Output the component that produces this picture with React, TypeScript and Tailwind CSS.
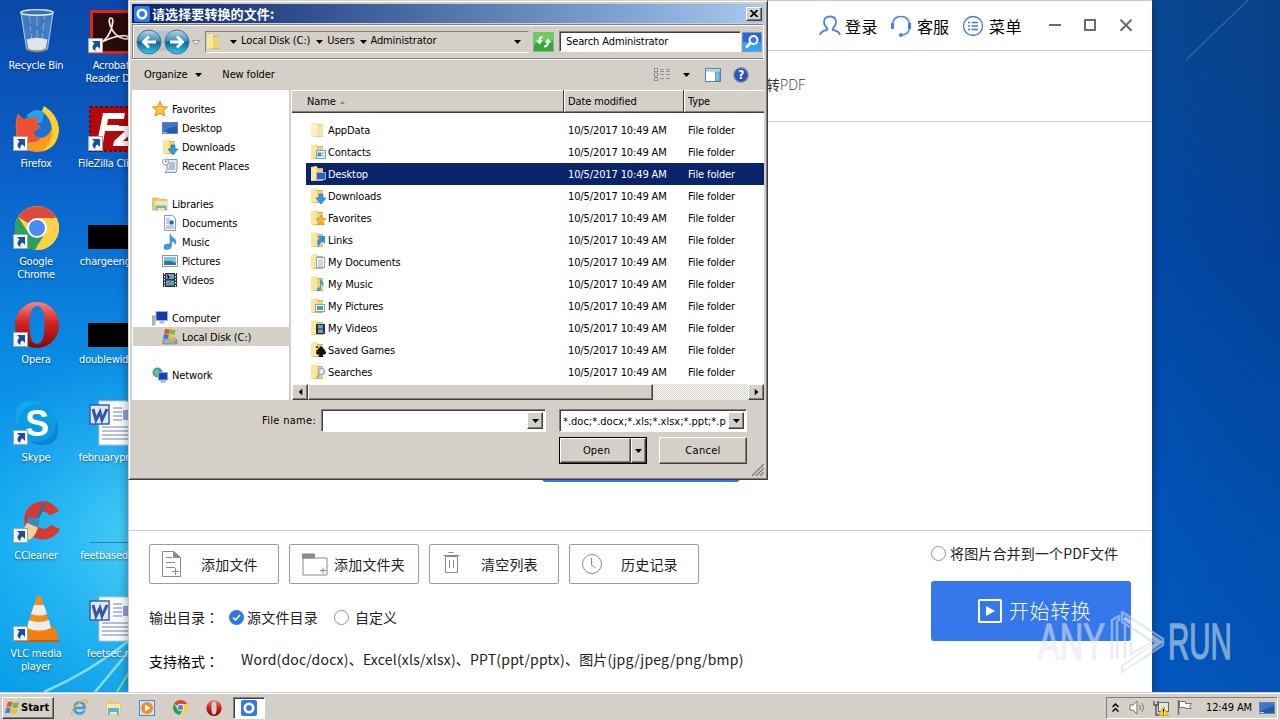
import type { ReactNode } from "react";

const UI_FONT = "font-['DejaVu_Sans_Condensed','DejaVu_Sans',sans-serif] tracking-[-0.12px]";
const CJK_FONT = "font-['Noto_Sans_CJK_SC',sans-serif]";

/* ---------- shared bits ---------- */

function Down({ className = "" }: { className?: string }) {
  return (
    <svg width="7" height="4" viewBox="0 0 7 4" className={`shrink-0 ${className}`}>
      <path d="M0 0h7L3.5 4z" fill="currentColor" />
    </svg>
  );
}

function Shortcut() {
  return (
    <svg width="16" height="16" viewBox="0 0 16 16" className="absolute -left-px bottom-0">
      <rect x=".5" y=".5" width="14" height="14" fill="#f4f6f8" stroke="#9aa" />
      <path d="M4 3h8v8l-2.500-2.500C7.500 9.500 7 11 7.500 13 4 11.500 3.500 8.500 6.500 5.500z" fill="#1c4f96" />
    </svg>
  );
}

function AppLogo({ size }: { size: number }) {
  return (
    <svg width={size} height={size} viewBox="0 0 16 16" className="shrink-0">
      <rect width="16" height="16" rx="2" fill="#3478ee" />
      <circle cx="8" cy="8" r="4.200" fill="none" stroke="#fff" strokeWidth="2.600" />
    </svg>
  );
}

function ChromeIcon({ size }: { size: number }) {
  return (
    <svg width={size} height={size} viewBox="0 0 44 44">
      <circle cx="22" cy="22" r="22" fill="#fdd54a" />
      <path d="M22 22 3 11A22 22 0 0 1 41.500 12H22z" fill="#dc4a3c" />
      <path d="M3 11A22 22 0 0 0 20 44l9-15-7-7-9 4z" fill="#27a25c" />
      <path d="M22 12h19.500A22 22 0 0 1 20 44l10.500-17z" fill="#fdd04a" />
      <circle cx="22" cy="22" r="10" fill="#fff" />
      <circle cx="22" cy="22" r="8" fill="#4a8af4" />
    </svg>
  );
}

function OperaIcon({ size }: { size: number }) {
  return (
    <svg width={size} height={size} viewBox="0 0 44 46">
      <defs>
        <linearGradient id="opera" x1="0" y1="0" x2="0" y2="1">
          <stop offset="0" stopColor="#f2867c" />
          <stop offset=".45" stopColor="#d5231f" />
          <stop offset="1" stopColor="#8a0508" />
        </linearGradient>
      </defs>
      <path
        fillRule="evenodd"
        fill="url(#opera)"
        d="M22 0a22 23 0 1 0 .01 0zM22 4c6 0 7.500 9 7.500 19S28 42 22 42s-7.500-9-7.500-19S16 4 22 4z"
      />
    </svg>
  );
}

/* ---------- desktop ---------- */

function RecycleBin() {
  return (
    <svg width="38" height="46" viewBox="0 0 40 48">
      <path d="M3 4 9 43q11 5 22 0l6-39z" fill="#8fb5dc" fillOpacity=".45" stroke="#bcd3ea" />
      <path d="M9 33q10-4 22 0l-2 10q-9 4-18 0z" fill="#dde4ec" />
      <path d="M12 8l3 32M20 8v34M28 8l-3 32" stroke="#d3e5f6" strokeOpacity=".45" />
      <path d="M10 15l9 7 10-10M13 26l8-5 8 6" stroke="#3f76b8" fill="none" strokeWidth="2" />
      <ellipse cx="20" cy="4.500" rx="17" ry="3" fill="#3f6fa8" stroke="#dbe7f2" strokeWidth="1.500" />
      <path d="M9 43q11 5 22 0" stroke="#8c8576" strokeWidth="2" fill="none" />
    </svg>
  );
}

function Firefox() {
  return (
    <svg width="44" height="46" viewBox="0 0 44 46">
      <circle cx="23" cy="22" r="17" fill="#1d6fd0" />
      <path d="M12 9q9-8 17-3l-2 10-10 4z" fill="#27a0ea" />
      <path d="M29 0q14 9 15 23-1 22-22 23Q2 45 1 26 0 14 3 8l6 6q5-3 10-2l2-2q2 4 0 8l4 2q-1 4-6 5-1 6 6 7 8-1 11-8 3 0 3-7-3-9-10-17z" fill="#fb9a1f" />
      <path d="M29 0q14 9 15 23-1 18-16 22 9-9 9-20 0-12-10-20z" fill="#fed02f" />
      <path d="M3 8l6 6q5-3 10-2l2-2q2 4 0 8l4 2q-1 4-6 5-1 6 6 7-2 5-10 4-4 4-7 2Q1 32 1 24 1 14 3 8z" fill="#ef5033" />
    </svg>
  );
}

function Acrobat() {
  return (
    <svg width="44" height="44" viewBox="0 0 44 44">
      <rect width="44" height="44" fill="#e02418" />
      <rect x="3" y="3" width="41" height="38" fill="#2b0a0c" />
      <path d="M10 33q9-4 12-17 2-8-1-8t-1 7q4 12 15 14 4 0 3-2t-8-1q-8 1-18 6-2 2-2 1z" fill="none" stroke="#f2e9e9" strokeWidth="1.700" />
    </svg>
  );
}

function FileZilla() {
  return (
    <svg width="46" height="46" viewBox="0 0 46 46">
      <rect x="1" y="1" width="44" height="44" fill="#b3090b" stroke="#7d0204" strokeWidth="2" strokeDasharray="3 2" />
      <path d="M14 7h22l-1 6H19l-1 6h12l-1 6H16l-2 12H8z" fill="#fff" />
      <path d="M28 20h18l-1 5-11 10h11l-1 5H24l1-5 11-10h-9z" fill="#fff" />
    </svg>
  );
}

function Skype() {
  return (
    <svg width="46" height="46" viewBox="0 0 46 46">
      <rect x="2" y="1" width="30" height="30" rx="13" fill="#17a7e8" />
      <rect x="13" y="14" width="31" height="31" rx="13" fill="#0b86d6" />
      <circle cx="23" cy="23" r="19" fill="#0a9be3" />
      <text x="23" y="36" textAnchor="middle" fontSize="36" fontWeight="bold" fill="#fff" fontFamily="Liberation Sans, sans-serif">
        S
      </text>
    </svg>
  );
}

function CCleaner() {
  return (
    <svg width="50" height="46" viewBox="0 0 50 46">
      <path d="M49 12Q40-1 27 2 12 5 11 22q1 20 20 21 13 0 19-11l-10-5q-5 6-10 4-7-2-6-10 2-9 9-8 4 1 6 4z" fill="#d43a2e" />
      <path d="M33 4 26 20" stroke="#1e6fae" strokeWidth="3" />
      <path d="M16 18l12 4-2 8-12-5z" fill="#3289c4" />
      <path d="M14 25l12 5q-3 12-12 14-8 1-13-5 9-3 13-14z" fill="#f2d194" />
    </svg>
  );
}

function Vlc() {
  return (
    <svg width="46" height="47" viewBox="0 0 46 47">
      <path d="M6 32h35l4 13H2z" fill="#ee7f12" />
      <path d="M2 45h43v2H2z" fill="#c95d05" />
      <path d="M23 1h4l10 33q-13 6-25 0z" fill="#f58b18" />
      <path d="M20 10h10l3 9q-8 3-16 0zM15 25q10 4 20 0l2 8q-12 5-24 0z" fill="#ececec" />
    </svg>
  );
}

function WordDoc() {
  return (
    <svg width="46" height="46" viewBox="0 0 46 46">
      <path d="M10 1h28l8 8v36H10z" fill="#fdfdff" stroke="#b9c1d6" />
      <path d="M24 8h9M24 12h9M24 16h9M24 20h9M13 27h31M13 31h31M13 35h31M13 39h31" stroke="#6f80b8" />
      <path d="M34 10h10v10H34z" fill="#8fa5d6" />
      <rect x="1" y="5" width="19" height="19" fill="#dfe8fa" stroke="#3a5cab" strokeWidth="1.500" />
      <path d="M4 9l3 11 4-8 2 8 5-11" fill="none" stroke="#3556a6" strokeWidth="3" />
    </svg>
  );
}

function BlackFile() {
  return <div className="mb-px h-6 w-12 shrink-0 bg-black" />;
}

function LineFile() {
  return <div className="mb-px h-px w-11 bg-[#2a86a6]" />;
}

type DesktopItem = { label: string; icon: ReactNode; shortcut?: boolean };

const column1: DesktopItem[] = [
  { label: "Recycle Bin", icon: <RecycleBin /> },
  { label: "Firefox", icon: <Firefox />, shortcut: true },
  { label: "Google Chrome", icon: <ChromeIcon size={44} />, shortcut: true },
  { label: "Opera", icon: <OperaIcon size={46} />, shortcut: true },
  { label: "Skype", icon: <Skype />, shortcut: true },
  { label: "CCleaner", icon: <CCleaner />, shortcut: true },
  { label: "VLC media player", icon: <Vlc />, shortcut: true },
];

const column2: DesktopItem[] = [
  { label: "Acrobat Reader DC", icon: <Acrobat />, shortcut: true },
  { label: "FileZilla Client", icon: <FileZilla />, shortcut: true },
  { label: "chargeengi...", icon: <BlackFile /> },
  { label: "doublewide...", icon: <BlackFile /> },
  { label: "februarypro...", icon: <WordDoc /> },
  { label: "feetbased.rtf", icon: <LineFile /> },
  { label: "feetsec.rtf", icon: <WordDoc /> },
];

function DesktopColumn({ items }: { items: DesktopItem[] }) {
  return (
    <div className="flex w-[75px] flex-col">
      {items.map((item) => (
        <div key={item.label} className="flex h-[98px] flex-col items-center">
          <div className="relative flex h-[49px] w-[46px] items-end justify-center">
            {item.icon}
            {item.shortcut && <Shortcut />}
          </div>
          <span className="mr-px mt-[5px] w-[72px] text-center text-[11px] leading-[13px] tracking-[-0.2px] text-white [text-shadow:0_1px_2px_#0048]">
            {item.label}
          </span>
        </div>
      ))}
    </div>
  );
}

function Wallpaper() {
  return (
    <svg width="1280" height="720" className="absolute inset-0">
      <defs>
        <linearGradient id="sky" x1="0" y1="0" x2="0" y2="1">
          <stop offset="0" stopColor="#0a48a8" />
          <stop offset=".25" stopColor="#0b62ca" />
          <stop offset=".5" stopColor="#0a8ce4" />
          <stop offset=".75" stopColor="#10a8f2" />
          <stop offset="1" stopColor="#0a9ee8" />
        </linearGradient>
        <radialGradient id="glow" cx="150" cy="540" r="200" gradientUnits="userSpaceOnUse">
          <stop offset="0" stopColor="#5fdcf8" stopOpacity=".8" />
          <stop offset="1" stopColor="#30c0f5" stopOpacity="0" />
        </radialGradient>
        <linearGradient id="right" x1="0" y1="0" x2="0" y2="1">
          <stop offset="0" stopColor="#0b4284" />
          <stop offset=".35" stopColor="#03429a" />
          <stop offset=".75" stopColor="#0252b4" />
          <stop offset="1" stopColor="#0358be" />
        </linearGradient>
        <linearGradient id="rightShade" x1="0" y1="0" x2="1" y2="0">
          <stop offset="0" stopColor="#0060d0" stopOpacity=".2" />
          <stop offset="1" stopColor="#003a88" stopOpacity=".15" />
        </linearGradient>
      </defs>
      <rect width="400" height="720" fill="url(#sky)" />
      <rect width="400" height="720" fill="url(#glow)" />
      <path d="M44 692Q90 672 130 640M95 692l35-42" stroke="#b8f2fb" strokeOpacity=".7" strokeWidth="2.500" fill="none" />
      <path d="M117 692l12-20" stroke="#6fe08a" strokeWidth="2" />
      <rect x="1152" width="128" height="720" fill="url(#right)" />
      <rect x="1152" width="128" height="720" fill="url(#rightShade)" />
      <path d="M1248 0l-62 60" stroke="#5b93c8" strokeOpacity=".4" strokeWidth="1.500" />
    </svg>
  );
}

/* ---------- converter window ---------- */

function ConverterHeader() {
  return (
    <header className="flex h-[50px] items-center justify-end border-b border-[#cfcfcf] pr-[19px] text-[16px] text-black">
      <svg width="22" height="22" viewBox="0 0 22 22" fill="none" stroke="#4a82e6" strokeWidth="1.800">
        <path d="M1 20q1-4 7-5 1-1-1-3-2-2-2-5 0-5.500 6-5.500T17 7q0 3-2 5t-1 3q6 1 7 5" />
      </svg>
      <span className="ml-1 w-[45px] tracking-[0.4px]">登录</span>
      <svg width="22" height="22" viewBox="0 0 22 22" fill="none" stroke="#4a82e6" strokeWidth="1.600">
        <path d="M2.500 10Q3 1.500 11 1.500T19.500 10v2q0 7-7 8" />
        <path d="M2.500 8v6M19.500 8v6" strokeWidth="3" />
        <circle cx="11" cy="20" r="1.200" fill="#4a82e6" />
      </svg>
      <span className="ml-[5px] w-[45px]">客服</span>
      <svg width="22" height="22" viewBox="0 0 22 22" fill="none" stroke="#3d78e0" strokeWidth="1.300">
        <circle cx="11" cy="11" r="9.500" />
        <path d="M6 7.500h2M9.500 7.500H16M6 11h2M9.500 11H16M6 14.500h2M9.500 14.500H16" strokeWidth="1.600" />
      </svg>
      <span className="ml-[5px] w-[60px] tracking-[0.4px]">菜单</span>
      <svg width="84" height="14" viewBox="0 0 84 14" fill="none" stroke="#6b6b6b" strokeWidth="2">
        <path d="M0 6h12M71.500 .800l11 11M82.500 .800l-11 11" />
        <rect x="36" y="1" width="10" height="10" />
      </svg>
    </header>
  );
}

function ToolButton({ icon, label, narrow }: { icon: ReactNode; label: string; narrow?: boolean }) {
  return (
    <button className="flex h-10 w-[130px] items-center rounded-[2px] border border-[#9b9b9b] bg-white pl-3 text-[14px] tracking-[0.2px] text-[#222]">
      {icon}
      <span className={narrow ? "ml-1" : "ml-[17px]"}>{label}</span>
    </button>
  );
}

function ToolIcon({ w, children }: { w: number; children: ReactNode }) {
  return (
    <svg width={w} height="28" viewBox={`0 0 ${w} 28`} fill="none" stroke="#8a8a8a" className="shrink-0">
      {children}
    </svg>
  );
}

/* the TC face centres the full-width colon in its cell */
function Colon() {
  return <span className="font-['Noto_Sans_CJK_TC',sans-serif]" lang="zh-Hant">：</span>;
}

function ConverterWindow() {
  return (
    <section
      className={`absolute left-32 top-0 flex h-[692px] w-[1024px] flex-col border-l border-t border-[#c9c9c9] bg-white tracking-normal shadow-[0_0_10px_#0006] ${CJK_FONT}`}
    >
      <ConverterHeader />
      <div className="flex h-[71px] shrink-0 items-center border-b border-[#cfcfcf] pb-1 pl-[637px] text-[14px] text-[#333]">
        转<span className="font-['Open_Sans',sans-serif] font-light">PDF</span>
      </div>
      <div className="flex h-[409px] shrink-0 items-end border-b border-[#d0d0d0] pb-12 pl-[413px]">
        <div className="h-12 w-[198px] rounded bg-[#3478ec]" />
      </div>
      <footer className="flex flex-1 justify-between pl-5 pr-[21px] text-[14px] text-[#222]">
        <div className="flex flex-col pt-[13px]">
          <div className="flex gap-2.5">
            <ToolButton
              label="添加文件"
              icon={
                <ToolIcon w={22}>
                  <path d="M.5 1.500h11l7 6v19H.5z" />
                  <path d="M11.500 1.500v6h7z" fill="#8a8a8a" />
                  <path d="M4 7.500h6M4 12.500h9M4 17.500h9M10 21.500h7M13.500 18v7" />
                </ToolIcon>
              }
            />
            <ToolButton
              narrow
              label="添加文件夹"
              icon={
                <ToolIcon w={28}>
                  <rect x=".5" y="4" width="12" height="4" fill="#8a8a8a" />
                  <path d="M1 8h24v17H1zM18 20.500h6M21 17.500v6" />
                </ToolIcon>
              }
            />
            <ToolButton
              label="清空列表"
              icon={
                <ToolIcon w={22}>
                  <path d="M3.500 6.500h12v16h-12zM1.500 5.500h16M6.500 2.500h5M7.500 10v8M11.500 10v8" />
                </ToolIcon>
              }
            />
            <ToolButton
              label="历史记录"
              icon={
                <ToolIcon w={22}>
                  <circle cx="10" cy="14" r="9.500" />
                  <path d="M9.500 8v7l4 3" />
                </ToolIcon>
              }
            />
          </div>
          <div className="mt-[22px] flex h-[22px] items-center">
            <span className="w-20">输出目录<Colon /></span>
            <svg width="15" height="15" viewBox="0 0 15 15">
              <circle cx="7.500" cy="7.500" r="7.500" fill="#2f76e8" />
              <path d="M4 7.500l2.500 2.500L11 5" fill="none" stroke="#fff" strokeWidth="1.600" />
            </svg>
            <span className="ml-[3px] w-[87px] tracking-[0.2px]">源文件目录</span>
            <span className="size-[15px] rounded-full border border-[#8f8f8f]" />
            <span className="ml-1.5">自定义</span>
          </div>
          <div className="mt-5 flex h-[22px] items-center">
            <span className="mt-1 w-[92px] text-black">支持格式<Colon /></span>
            <span className="whitespace-nowrap tracking-[0.2px]">
              Word(doc/docx)、Excel(xls/xlsx)、PPT(ppt/pptx)、图片(jpg/jpeg/png/bmp)
            </span>
          </div>
        </div>
        <div className="flex w-[200px] flex-col pt-[11px]">
          <div className="flex h-[22px] items-center whitespace-nowrap tracking-[0.15px]">
            <span className="mr-1 size-[15px] rounded-full border border-[#8f8f8f]" />
            将图片合并到一个PDF文件
          </div>
          <button className="mt-[17px] flex h-[60px] items-center rounded-[3px] bg-[#3478ec] pl-[47px] text-[20px] font-light tracking-[0.6px] text-white">
            <svg width="24" height="24" viewBox="0 0 24 24" className="mr-[7px]">
              <rect x="1" y="1" width="22" height="22" rx="1" fill="none" stroke="#fff" strokeWidth="2" />
              <path d="M8 7l9 5-9 5z" fill="#fff" />
            </svg>
            开始转换
          </button>
        </div>
      </footer>
    </section>
  );
}

/* ---------- file dialog ---------- */

type Kind =
  | "plain" | "contacts" | "desktop" | "down" | "star" | "links" | "doc"
  | "music" | "picture" | "video" | "games" | "search";

const overlays: Record<Kind, ReactNode> = {
  plain: null,
  contacts: (
    <g>
      <rect x="6.500" y="6.500" width="9" height="8" fill="#eef6fb" stroke="#6fa3c9" />
      <path d="M8 9h3v3H8zM12 9h2M12 12h2" fill="#3f88c5" stroke="#3f88c5" strokeWidth=".8" />
    </g>
  ),
  desktop: <path d="M6.500 6.500h9v7h-9z" fill="#2b62b8" stroke="#9bb7dc" />,
  down: <path d="M9 6h4v4h3l-5 6-5-6h3z" fill="#2f9be6" stroke="#1469ad" strokeWidth=".6" />,
  star: <path d="M11 5l1.500 3.500 3.500.3-2.700 2.500.9 3.700-3.200-2-3.200 2 .9-3.700L6 8.800l3.500-.3z" fill="#fbb32a" stroke="#cf7e10" strokeWidth=".6" />,
  links: <path d="M7 4h8v8l-2.500-2.500Q9 11 9 15 5 10 9.500 6.500z" fill="#2f8fdc" />,
  doc: (
    <g>
      <rect x="6.500" y="3.500" width="8" height="10" fill="#fff" stroke="#8ea6c0" />
      <path d="M8 6h5M8 8h5M8 10h5M8 12h5" stroke="#7b9cc4" strokeWidth=".8" />
    </g>
  ),
  music: <path d="M10 3q5 3 3 8l-1-3-1 .5V13q-1 3-4 2-1-3 3-4z" fill="#3d97dd" />,
  picture: (
    <g>
      <rect x="5.500" y="6.500" width="9" height="7" fill="#fff" stroke="#86a3b8" />
      <path d="M7 8h6v4H7z" fill="#4ca1b8" />
    </g>
  ),
  video: (
    <g>
      <rect x="6" y="4" width="9" height="10" fill="#27323d" />
      <path d="M8 5h5v3.500H8zM8 9.500h5V13H8z" fill="#6fa0c4" />
    </g>
  ),
  games: (
    <g>
      <path d="M11 4q5 4 5 7.500-2 2-3.500.5l1 3h-5l1-3Q8 13.500 6 11.500 6 8 11 4z" fill="#111" />
      <path d="M6 4h2v2H6zM6 8h2v2H6z" fill="#5c4a22" />
    </g>
  ),
  search: (
    <g>
      <circle cx="11.500" cy="7.500" r="3" fill="#e4f0fa" stroke="#8aa4c0" strokeWidth="1.200" />
      <path d="M9.500 10 7 14" stroke="#c0a56a" strokeWidth="2" />
    </g>
  ),
};

function FolderIcon({ kind = "plain", faded }: { kind?: Kind; faded?: boolean }) {
  return (
    <svg width="16" height="16" viewBox="0 0 16 16" className={`shrink-0 ${faded ? "opacity-60" : ""}`}>
      <path d="M1 1h6l1 1h5v13H1z" fill="#d9b44a" />
      <path d="M1 1l6-1v14l-6 1z" fill="#f8e79f" />
      <path d="M7 3h6v11H7z" fill="#edd175" />
      {overlays[kind]}
    </svg>
  );
}

function Mini({ children }: { children: ReactNode }) {
  return (
    <svg width="16" height="16" viewBox="0 0 16 16" className="shrink-0">
      {children}
    </svg>
  );
}

const monitor = (
  <Mini>
    <rect x=".5" y="2.500" width="15" height="11" fill="#245aa8" stroke="#5d86b8" />
    <path d="M1 3h14v3Q8 7 1 12z" fill="#3f78c8" />
    <path d="M1 12.500h4" stroke="#bcd0e6" />
  </Mini>
);

type TreeItem = { label: string; icon: ReactNode; level: 0 | 1; active?: boolean } | null;

const tree: TreeItem[] = [
  {
    label: "Favorites",
    level: 0,
    icon: (
      <Mini>
        <path d="M8 .5l2.200 5 5.300.5-4 3.600 1.200 5.400L8 12.200 3.300 15l1.200-5.400L.5 6l5.300-.5z" fill="#ffc53c" stroke="#d98a1c" />
      </Mini>
    ),
  },
  { label: "Desktop", level: 1, icon: monitor },
  { label: "Downloads", level: 1, icon: <FolderIcon kind="down" /> },
  {
    label: "Recent Places",
    level: 1,
    icon: (
      <Mini>
        <path d="M5 1.500h10v10l-1 3H3l2-3z" fill="#e3ebf2" stroke="#8296a8" />
        <path d="M7 5h6M7 7h6M7 9h6M6 11h7" stroke="#7d96b0" />
        <circle cx="3.500" cy="4" r="3" fill="#fff" stroke="#8a98a6" />
        <path d="M3.500 2.500V4H5" stroke="#555" fill="none" strokeWidth=".8" />
      </Mini>
    ),
  },
  null,
  {
    label: "Libraries",
    level: 0,
    icon: (
      <Mini>
        <path d="M.5 2h6l1 1.500H15V14H.5z" fill="#e9cc6c" stroke="#c9a646" strokeWidth=".6" />
        <path d="M3 5h12v9H3z" fill="#f7e6a4" />
        <path d="M3.500 14.500V9.500h11v5l-2-.5v-2h-7v2z" fill="#64b5d8" />
      </Mini>
    ),
  },
  {
    label: "Documents",
    level: 1,
    icon: (
      <Mini>
        <path d="M2.500.5h8l3 3v12h-11z" fill="#fff" stroke="#8a9bb0" />
        <path d="M4 4h4M4 6h3M4 8h3M4 11h8M4 13h8" stroke="#7d9ccd" />
        <path d="M7.500 5.500h4v4h-4z" fill="#2b62ad" />
      </Mini>
    ),
  },
  {
    label: "Music",
    level: 1,
    icon: (
      <Mini>
        <path d="M8 0q1 3 4 4.500t1 6q0-3-3.500-3.500v5q0 3-4 3.500T2 13q0-3 3.500-3H8z" fill="#3c9be3" stroke="#2376b8" strokeWidth=".5" />
      </Mini>
    ),
  },
  {
    label: "Pictures",
    level: 1,
    icon: (
      <Mini>
        <rect x=".5" y="2.500" width="15" height="11" fill="#fff" stroke="#8b9aa6" />
        <path d="M2 4h12v8H2z" fill="#7fc3ea" />
        <path d="M2 8q6-1 12 2v2H2z" fill="#2c7a86" />
      </Mini>
    ),
  },
  {
    label: "Videos",
    level: 1,
    icon: (
      <Mini>
        <rect x="1" y="1" width="14" height="14" fill="#26313c" />
        <path d="M4 2h8v5H4zM4 8.500h8v5H4z" fill="#5fa3c9" />
        <path d="M5 2l3 3-2 2M9 9l-3 3" stroke="#b8453c" />
        <path d="M2.500 1v14M13.500 1v14" stroke="#fff" strokeDasharray="1.500 1.500" />
      </Mini>
    ),
  },
  null,
  {
    label: "Computer",
    level: 0,
    icon: (
      <Mini>
        <rect x="0" y="6" width="3" height="9" fill="#b7c4a9" stroke="#7c8870" strokeWidth=".6" />
        <rect x="4" y="1.500" width="11.500" height="9" fill="#1a35b0" stroke="#9cb0d8" />
        <path d="M8 11h4l1 2.500H7z" fill="#b6bfca" />
      </Mini>
    ),
  },
  {
    label: "Local Disk (C:)",
    level: 1,
    active: true,
    icon: (
      <Mini>
        <path d="M1 11l3-2h8l3 2v4H1z" fill="#a7adb3" stroke="#70767c" strokeWidth=".7" />
        <path d="M12 13h2" stroke="#35c24a" strokeWidth="1.500" />
        <path d="M3 0l5 .5-1 4.500-5-.5z" fill="#e6512a" />
        <path d="M8.500.5l5 .5-1 4.500-5-.5z" fill="#7bb93a" />
        <path d="M2 5l5 .5L6 10l-5-.5z" fill="#3d7fd6" />
        <path d="M7.500 5.500l5 .5-1 4.500-5-.5z" fill="#f2bc2c" />
      </Mini>
    ),
  },
  null,
  {
    label: "Network",
    level: 0,
    icon: (
      <Mini>
        <circle cx="5.500" cy="5.500" r="5" fill="#3c9cc9" />
        <path d="M2 4q3-3 5 0T3 9z" fill="#6fc470" />
        <rect x="6.500" y="5.500" width="9" height="7.500" fill="#1a3fc0" stroke="#8fa6d0" />
        <path d="M9 13.500h4l1 2H8z" fill="#a5afbc" />
      </Mini>
    ),
  },
];

const files: { name: string; kind: Kind; selected?: boolean }[] = [
  { name: "AppData", kind: "plain" },
  { name: "Contacts", kind: "contacts" },
  { name: "Desktop", kind: "desktop", selected: true },
  { name: "Downloads", kind: "down" },
  { name: "Favorites", kind: "star" },
  { name: "Links", kind: "links" },
  { name: "My Documents", kind: "doc" },
  { name: "My Music", kind: "music" },
  { name: "My Pictures", kind: "picture" },
  { name: "My Videos", kind: "video" },
  { name: "Saved Games", kind: "games" },
  { name: "Searches", kind: "search" },
];

const RAISED =
  "bg-[#d4d0c8] border border-t-white border-l-white border-r-[#404040] border-b-[#404040] shadow-[inset_-1px_-1px_0_#808080]";
const SUNKEN =
  "bg-white border border-t-[#808080] border-l-[#808080] border-r-white border-b-white shadow-[inset_1px_1px_0_#404040]";

function AddressBar() {
  return (
    <div className="mt-px flex h-[35px] items-center border border-[#808080] border-r-white pl-[3px] shadow-[inset_1px_1px_0_#fff,0_1px_0_#fff]">
      <svg width="69" height="28" viewBox="0 0 69 28" className="shrink-0">
        <defs>
          <linearGradient id="orb" x1="0" y1="0" x2="0" y2="1">
            <stop offset="0" stopColor="#b9d6e6" />
            <stop offset=".45" stopColor="#3f8fbe" />
            <stop offset=".5" stopColor="#0f5f92" />
            <stop offset="1" stopColor="#2fd0f4" />
          </linearGradient>
        </defs>
        <rect x="12" y="3" width="28" height="20" fill="#b9c0c6" />
        <circle cx="13" cy="14" r="12" fill="url(#orb)" stroke="#4c6f86" />
        <circle cx="41" cy="14" r="12" fill="url(#orb)" stroke="#4c6f86" />
        <path d="M20 14H8M13 8.500 7.500 14l5.500 5.500M34 14h12M41 8.500l5.500 5.500-5.500 5.500" stroke="#fff" strokeWidth="3" fill="none" />
        <path d="M56.500 12.500h7l-3.500 4z" fill="#f3f1ec" stroke="#9a968c" />
      </svg>
      <div className="mr-1 flex h-[22px] w-[324px] items-center border border-[#808080] border-b-white border-r-[#d4d0c8]">
        <FolderIcon />
        <Down className="ml-2 mr-1" />
        <span className="mr-1.5">Local Disk (C:)</span>
        <Down className="mr-1" />
        <span className="mr-1.5">Users</span>
        <Down className="mr-[3px]" />
        <span>Administrator</span>
        <Down className="ml-auto mr-[7px]" />
      </div>
      <svg width="21" height="20" viewBox="0 0 21 20" className="mr-[5px] shrink-0">
        <rect x=".5" y=".5" width="20" height="19" fill="#35a838" stroke="#83b884" />
        <path d="M1 1h19v8Q10 7 1 12z" fill="#6ccc5f" />
        <path d="M9.500 5Q6.500 5 6.500 9M11 14.500q4 0 4-5" stroke="#fff" strokeWidth="2" fill="none" />
        <path d="M3 8.500h7l-3.500 4zM11.500 10.500h7L15 6.500z" fill="#fff" />
      </svg>
      <div className={`flex h-[21px] w-[182px] shrink-0 items-center pl-1.5 pt-px ${SUNKEN}`}>Search Administrator</div>
      <svg width="20" height="20" viewBox="0 0 20 20" className="ml-px shrink-0">
        <rect x=".5" y=".5" width="19" height="19" fill="#2f62d6" stroke="#7f96c8" />
        <path d="M1 10h18v9H1z" fill="#35a4ee" />
        <circle cx="11.500" cy="8" r="4" fill="#3a7be0" stroke="#fff" strokeWidth="2" />
        <path d="M8.500 11 4 15.500" stroke="#fff" strokeWidth="2.500" />
      </svg>
    </div>
  );
}

function FileDialog() {
  return (
    <section
      className={`absolute left-32 top-0 flex h-[480px] w-[640px] flex-col border border-b-[#404040] border-l-[#d4d0c8] border-r-[#404040] border-t-[#d4d0c8] bg-[#d4d0c8] p-[3px] text-[11px] text-black shadow-[inset_1px_1px_0_#fff,inset_-1px_-1px_0_#808080] ${UI_FONT}`}
    >
      <div className="flex h-[19px] shrink-0 items-center bg-gradient-to-r from-[#0a246a] to-[#a6caf0] pl-0.5 pr-0.5">
        <AppLogo size={16} />
        <span className={`ml-0.5 flex-1 text-[13px] font-bold leading-[18px] tracking-[0.1px] text-white ${CJK_FONT}`}>
          请选择要转换的文件:
        </span>
        <button className={`flex h-[14px] w-4 items-center justify-center ${RAISED}`}>
          <svg width="8" height="7" viewBox="0 0 8 7">
            <path d="M.5 0l7 7M7.500 0l-7 7" stroke="#000" strokeWidth="1.600" />
          </svg>
        </button>
      </div>

      <AddressBar />

      <div className="flex h-[31px] shrink-0 items-center pl-3 pr-[15px]">
        <span className="pt-px">Organize</span>
        <Down className="ml-2 mr-5" />
        <span className="pt-px">New folder</span>
        <svg width="17" height="14" viewBox="0 0 17 14" className="ml-auto">
          <path d="M.5.5h3v3h-3zM.5 5h3v3h-3zM.5 9.500h3v3h-3z" fill="#e8eef4" stroke="#7c8896" />
          <path d="M6 1.500h4M12 1.500h4M6 3.500h4M12 3.500h4M6 6.500h4M12 6.500h4M6 10.500h4M12 10.500h4" stroke="#8a929c" />
        </svg>
        <Down className="ml-3 mr-[15px]" />
        <svg width="16" height="14" viewBox="0 0 16 14" className="mr-3">
          <rect x=".5" y=".5" width="15" height="13" fill="#fff" stroke="#4f85b8" />
          <path d="M1 2.500h14" stroke="#9fc0dd" strokeWidth="2" />
          <path d="M10.500 4h4v9h-4z" fill="#6cc3e6" stroke="#4f85b8" strokeWidth=".7" />
        </svg>
        <svg width="16" height="16" viewBox="0 0 16 16">
          <circle cx="8" cy="8" r="7.300" fill="#2c55b4" stroke="#8a97b8" strokeWidth="1.200" />
          <text x="8" y="12.300" textAnchor="middle" fontSize="12" fontWeight="bold" fill="#fff">?</text>
        </svg>
      </div>

      <div className="flex h-[310px] shrink-0">
        <nav className="w-[157px] bg-white pt-[9px]">
          {tree.map((item, i) => (
            <div
              key={i}
              className={`ml-px flex h-[19px] items-center gap-1 ${item?.active ? "bg-[#d4d0c8]" : ""} ${
                item?.level ? "pl-[29px]" : "pl-[19px]"
              }`}
            >
              {item && item.icon}
              {item && <span className="pt-[3px]">{item.label}</span>}
            </div>
          ))}
        </nav>
        <div className="w-[3px] border-r border-white" />
        <div className="flex flex-1 flex-col bg-white">
          <div className="flex h-[23px] border-b border-[#404040] bg-[#d4d0c8] shadow-[inset_0_1px_0_#fff,inset_0_-1px_0_#808080]">
            <div className="flex w-[272px] items-center gap-1 border-r border-[#404040] pl-[15px] pt-0.5">
              Name
              <svg width="5" height="3" viewBox="0 0 7 4"><path d="M0 4 3.500 0 7 4z" fill="#8b877f" /></svg>
            </div>
            <div className="flex w-[120px] items-center border-l border-r border-l-white border-r-[#404040] pl-[3px] pt-0.5">Date modified</div>
            <div className="flex flex-1 items-center border-l border-white pl-[3px] pt-0.5">Type</div>
          </div>
          <ul className="flex-1 pt-1.5">
            {files.map((f) => (
              <li
                key={f.name}
                className={`ml-[14px] flex h-[22px] items-center pl-1 ${f.selected ? "bg-[#0a246a] text-white" : ""}`}
              >
                <FolderIcon kind={f.kind} faded={f.kind === "plain"} />
                <span className="ml-0.5 w-60 pt-0.5">{f.name}</span>
                <span className="w-[120px] pt-0.5">10/5/2017 10:49 AM</span>
                <span className="pt-0.5">File folder</span>
              </li>
            ))}
          </ul>
          <div className="flex h-4 bg-[repeating-conic-gradient(#fff_0_25%,#d4d0c8_0_50%)] bg-[length:2px_2px]">
            <div className={`flex w-4 items-center justify-center ${RAISED}`}>
              <Down className="rotate-90" />
            </div>
            <div className={`w-[345px] ${RAISED}`} />
            <div className={`ml-auto flex w-4 items-center justify-center ${RAISED}`}>
              <Down className="-rotate-90" />
            </div>
          </div>
        </div>
      </div>

      <div className="flex flex-1 flex-col pl-[130px] pr-[17px] pt-[9px]">
        <div className="flex items-center">
          <span className="w-[59px] whitespace-nowrap pt-0.5 tracking-[0.3px]">File name:</span>
          <div className={`mr-[13px] flex h-[23px] w-[225px] justify-end p-0.5 ${SUNKEN}`}>
            <div className={`flex w-4 items-center justify-center ${RAISED}`}><Down /></div>
          </div>
          <div className={`flex h-[23px] w-[188px] items-stretch p-0.5 ${SUNKEN}`}>
            <span className="flex-1 overflow-hidden whitespace-nowrap pl-px leading-5 tracking-normal">*.doc;*.docx;*.xls;*.xlsx;*.ppt;*.p</span>
            <div className={`flex w-4 items-center justify-center ${RAISED}`}><Down /></div>
          </div>
        </div>
        <div className="mt-[5px] flex justify-end gap-3">
          <div className="flex h-[27px] w-[88px] border border-black">
            <button className={`flex-1 pl-0.5 pt-0.5 tracking-[0.2px] ${RAISED}`}>Open</button>
            <button className={`flex w-[15px] items-center justify-center ${RAISED}`}><Down /></button>
          </div>
          <button className={`h-[27px] w-[88px] pt-0.5 tracking-[0.3px] ${RAISED}`}>Cancel</button>
        </div>
      </div>
      <svg width="12" height="12" viewBox="0 0 12 12" className="absolute bottom-[3px] right-[3px]">
        <path d="M0 12 12 0M4 12l8-8M8 12l4-4" stroke="#808080" strokeWidth="1.400" />
      </svg>
    </section>
  );
}

/* ---------- taskbar ---------- */

function Taskbar() {
  return (
    <footer
      className={`absolute bottom-0 left-0 flex h-7 w-full items-center border-t border-[#d4d0c8] bg-[#d4d0c8] pl-0.5 pr-0.5 pt-0.5 text-[11px] text-black shadow-[inset_0_1px_0_#fff] ${UI_FONT}`}
    >
      <button className={`flex h-[22px] w-[52px] items-center gap-px pl-0.5 font-bold tracking-normal ${RAISED}`}>
        <svg width="15" height="14" viewBox="0 0 16 15" className="shrink-0">
          <path d="M3 1q3-1 5 0L6.500 6.500q-2-1-5 0z" fill="#e4572b" />
          <path d="M9 1.500q3 1 6-.5L13.500 7q-3 1-6 0z" fill="#76b83a" />
          <path d="M1.300 7.500q3-1 5 0L5 13q-2-1-5 0z" fill="#3f86d8" />
          <path d="M7.300 8q3 1 6 0L12 13.500q-3 1-6 0z" fill="#f4bd2c" />
        </svg>
        <span className="pt-0.5">Start</span>
      </button>
      <div className="ml-[17px] flex items-center gap-[17px]">
        <svg width="17" height="17" viewBox="0 0 17 17">
          <path d="M13.500 11.500q-1.500 3-5 3-5 0-5-5.500t5-5.500q5 0 5 5.500H4" fill="none" stroke="#3b9bdc" strokeWidth="2.500" />
          <path d="M1 16Q-1 11 7 5t9-3q0 2-2 4" fill="none" stroke="#e3b53c" strokeWidth="1.300" />
        </svg>
        <svg width="17" height="16" viewBox="0 0 17 16">
          <path d="M1 1h6l1 1.500h8V14H1z" fill="#e7ca6c" />
          <path d="M2 4h13v10H2z" fill="#f7e8ae" />
          <path d="M3 15V8h11v7h-2v-3H5v3z" fill="#5eb3db" />
        </svg>
        <svg width="16" height="16" viewBox="0 0 16 16">
          <rect x=".5" y=".5" width="15" height="15" fill="#cfe2f5" stroke="#4e8cc6" />
          <circle cx="8" cy="8" r="6" fill="#f18d1c" />
          <path d="M6 4.500 11.500 8 6 11.500z" fill="#fff" />
        </svg>
        <div className="ml-px flex gap-[18px]">
          <ChromeIcon size={15} />
          <OperaIcon size={16} />
        </div>
      </div>
      <div className={`ml-[11px] flex h-[22px] w-[32px] items-center justify-center ${SUNKEN}`}>
        <AppLogo size={16} />
      </div>
      <div className="ml-auto flex h-[22px] w-[172px] items-center border border-b-white border-l-[#808080] border-r-white border-t-[#808080] pl-[5px]">
        <svg width="7" height="9" viewBox="0 0 7 9" className="mr-[10px] shrink-0">
          <path d="M.5 4 3.500 1l3 3M.5 8.500l3-3 3 3" fill="none" stroke="#000" strokeWidth="1.500" />
        </svg>
        <svg width="17" height="15" viewBox="0 0 17 15" fill="none" stroke="#77736c" className="mr-[7px] shrink-0">
          <path d="M1 5h3l4-4v13l-4-4H1z" fill="#fff" />
          <path d="M10.500 5q2 2.500 0 5M12.500 3q4 4.500 0 9" />
        </svg>
        <svg width="16" height="16" viewBox="0 0 16 16" className="mr-2 shrink-0">
          <rect x="5.500" y="2.500" width="10" height="9" fill="#e9e7e2" stroke="#666" />
          <path d="M1 1v4h4V1M3 5v10h5" fill="none" stroke="#555" strokeWidth="1.400" />
          <path d="M10.500 6.500 15.500 15.500h-10z" fill="#ffd731" stroke="#b8930f" strokeWidth=".7" />
          <path d="M10.500 9v3.500M10.500 13.500v1" stroke="#000" />
        </svg>
        <svg width="16" height="15" viewBox="0 0 16 15" className="mr-[13px] shrink-0">
          <path d="M1.500 0v15" stroke="#666" strokeWidth="1.500" />
          <path d="M2.500 1.500h6v2h6l-2 3 2 2h-6v-1h-6z" fill="#fff" stroke="#777" />
        </svg>
        <span className="mr-[7px] whitespace-nowrap pt-px">12:49 AM</span>
        {monitor}
      </div>
    </footer>
  );
}

function Watermark() {
  return (
    <svg width="240" height="90" viewBox="0 0 240 90" className="absolute left-[1020px] top-[600px] opacity-55">
      <g fill="#e6ebf2" stroke="#dfe5ee" strokeWidth="1.400" fontFamily="Liberation Sans, sans-serif" fontSize="50" letterSpacing="0">
        <text transform="translate(18 59) scale(.65 1)">ANY</text>
        <text transform="translate(148 59) scale(.59 1)">RUN</text>
      </g>
      <g fill="none" stroke="#d5dce8" strokeLinejoin="round">
        <path d="M92 59V20l7-4v4l-2 1v38M105 59V22" strokeWidth="2.500" />
        <path d="M102 22V12l41 27v6l-41 27v-6l34-23z" strokeWidth="2.500" />
        <path d="M111 54V28l21 14z" strokeWidth="2" />
      </g>
      <path d="M104 18l36 24-36 26" stroke="#fff" strokeWidth="4" fill="none" />
    </svg>
  );
}

export default function App() {
  return (
    <main className={`relative h-[720px] w-[1280px] overflow-hidden bg-[#0a60c8] ${UI_FONT}`}>
      <Wallpaper />
      <div className="absolute left-[-1px] top-[5px] flex">
        <DesktopColumn items={column1} />
        <DesktopColumn items={column2} />
      </div>
      <ConverterWindow />
      <FileDialog />
      <Taskbar />
      <Watermark />
    </main>
  );
}
